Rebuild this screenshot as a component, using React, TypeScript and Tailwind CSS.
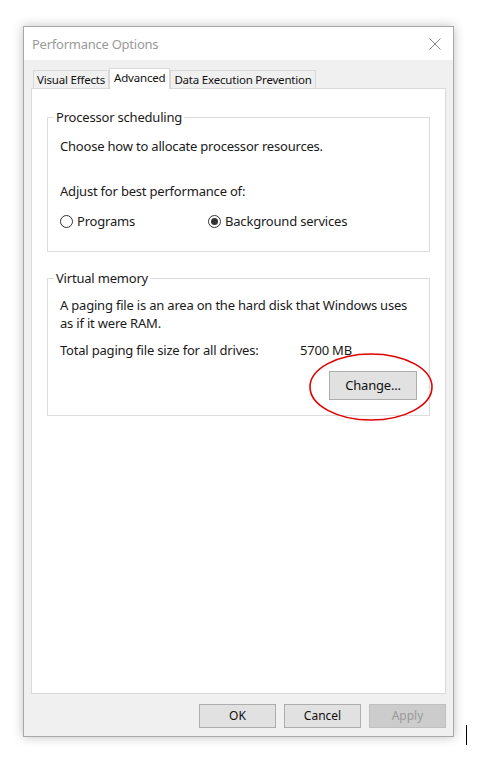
import React from "react";

const font = { fontFamily: '"Noto Sans", "Segoe UI", Arial, sans-serif' };

function Radio({ checked, label }: { checked?: boolean; label: string }) {
  return (
    <label className="flex items-center gap-[4px]">
      <span className="flex h-[13px] w-[13px] items-center justify-center rounded-full border border-[#333] bg-white">
        {checked && <span className="h-[7px] w-[7px] rounded-full bg-[#333]" />}
      </span>
      <span>{label}</span>
    </label>
  );
}

function GroupBox({ title, children, className }: { title: string; children: React.ReactNode; className?: string }) {
  return (
    <fieldset className={`mx-[15px] border border-[#dcdcdc] px-[12px] ${className ?? ""}`}>
      <legend className="-ml-[6px] px-[2px] leading-[16px] text-[#1a1a1a]">{title}</legend>
      {children}
    </fieldset>
  );
}

function Button({ children, disabled, className }: { children: React.ReactNode; disabled?: boolean; className?: string }) {
  return (
    <button
      className={`h-[24px] w-[77px] border text-[12px] ${
        disabled ? "border-[#bfbfbf] bg-[#cccccc] text-[#9a9a9a]" : "border-[#adadad] bg-[#e1e1e1] text-[#111]"
      } ${className ?? ""}`}
    >
      {children}
    </button>
  );
}

export default function App() {
  return (
    <div className="relative h-[765px] w-[488px] bg-white pt-[26px] pl-[23px]" style={font}>
      <div className="flex h-[711px] w-[431px] flex-col border border-[#a8a8a8] bg-[#f0f0f0] shadow-[0_0_10px_rgba(0,0,0,0.25)]">
        {/* title bar */}
        <div className="flex h-[33px] items-center justify-between bg-white pl-[8px] pr-[12px]">
          <span className="mt-[2px] text-[13px] tracking-[-0.25px] text-[#9a9a9a]">Performance Options</span>
          <svg width="12" height="12" viewBox="0 0 12 12" className="text-[#8a8a8a]">
            <path d="M0.5 0.5 L11.5 11.5 M11.5 0.5 L0.5 11.5" stroke="currentColor" strokeWidth="1" />
          </svg>
        </div>

        {/* tabs */}
        <div className="mt-[8px] flex items-end pl-[9px] text-[11.5px] leading-none tracking-[-0.2px] text-[#111]">
          <div className="mb-[-1px] flex h-[19px] items-center border border-[#d9d9d9] bg-[#f0f0f0] px-[3px]">Visual Effects</div>
          <div className="relative z-10 mb-[-1px] flex h-[21px] items-center border border-b-0 border-[#d9d9d9] bg-white px-[4px] pb-[2px]">Advanced</div>
          <div className="mb-[-1px] flex h-[19px] items-center border border-[#d9d9d9] bg-[#f0f0f0] px-[3px]">Data Execution Prevention</div>
        </div>

        {/* panel */}
        <div className="mx-[7px] flex h-[606px] flex-col border border-[#d9d9d9] bg-white pt-[20px] text-[13px] tracking-[-0.2px] text-[#1a1a1a]">
          <GroupBox title="Processor scheduling" className="h-[143px]">
            <p className="mt-[12px] leading-[18px]">Choose how to allocate processor resources.</p>
            <p className="mt-[27px] leading-[18px]">Adjust for best performance of:</p>
            <div className="mt-[12px] flex">
              <div className="w-[148px]">
                <Radio label="Programs" />
              </div>
              <Radio checked label="Background services" />
            </div>
          </GroupBox>

          <GroupBox title="Virtual memory" className="mt-[18px] h-[146px]">
            <p className="mt-[10px] leading-[18px]">
              A paging file is an area on the hard disk that Windows uses as if it were RAM.
            </p>
            <div className="mt-[9px] flex leading-[18px]">
              <span className="w-[240px]">Total paging file size for all drives:</span>
              <span>5700 MB</span>
            </div>
            <div className="mt-[12px] flex justify-end">
              <Button className="h-[29px] w-[88px] text-[13px]">Change...</Button>
            </div>
          </GroupBox>
        </div>

        {/* footer buttons */}
        <div className="mt-[10px] flex justify-end gap-[8px] pr-[7px]">
          <Button>OK</Button>
          <Button>Cancel</Button>
          <Button disabled>Apply</Button>
        </div>
      </div>

      {/* red annotation circle */}
      <svg className="absolute left-[308px] top-[351px]" width="130" height="72" viewBox="0 0 130 72">
        <ellipse cx="63" cy="36" rx="61" ry="33" fill="none" stroke="#e00000" strokeWidth="1.6" />
      </svg>

      {/* text cursor */}
      <div className="absolute left-[466px] top-[725px] h-[20px] w-[1px] bg-black" />
    </div>
  );
}
